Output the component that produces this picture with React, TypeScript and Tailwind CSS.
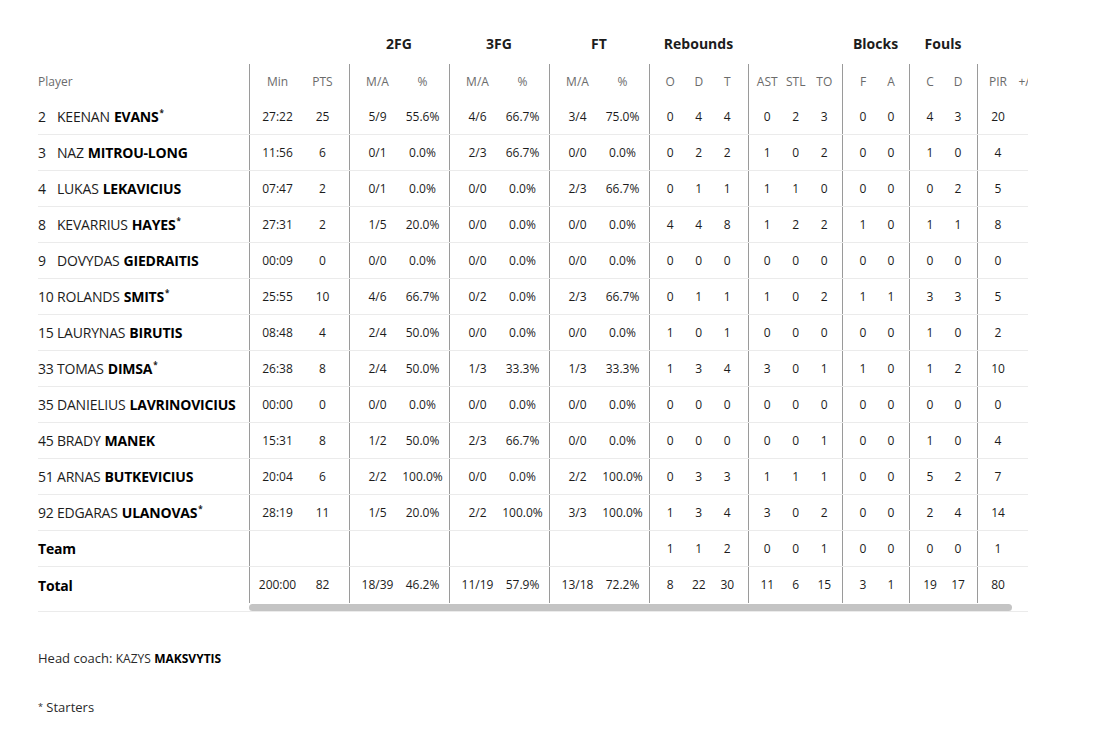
import React from 'react';

type Group = {
  label: string;
  box: string;
  cells: string[];
};

// widths per column group, the first cell of each group draws the divider
const groups: Group[] = [
  { label: '', box: 'w-[100px] pl-[5px]', cells: ['w-[45px]', 'w-[45px]'] },
  { label: '2FG', box: 'w-[100px] pl-[5px]', cells: ['w-[45px]', 'w-[45px]'] },
  { label: '3FG', box: 'w-[100px] pl-[5px]', cells: ['w-[45px]', 'w-[45px]'] },
  { label: 'FT', box: 'w-[100px] pl-[5px]', cells: ['w-[45px]', 'w-[45px]'] },
  { label: 'Rebounds', box: 'w-[99px] pl-[6px]', cells: ['w-[28.5px]', 'w-[28.5px]', 'w-[28.5px]'] },
  { label: '', box: 'w-[94px] pl-[4px]', cells: ['w-[28.5px]', 'w-[28.5px]', 'w-[28.5px]'] },
  { label: 'Blocks', box: 'w-[67px] pl-[6px]', cells: ['w-[28px]', 'w-[28px]'] },
  { label: 'Fouls', box: 'w-[68px] pl-[6px]', cells: ['w-[28px]', 'w-[28px]'] },
  { label: '', box: 'w-[68px] pl-[6px]', cells: ['w-[28px]', 'w-[28px]'] },
];

const headers = [
  ['Min', 'PTS'],
  ['M/A', '%'],
  ['M/A', '%'],
  ['M/A', '%'],
  ['O', 'D', 'T'],
  ['AST', 'STL', 'TO'],
  ['F', 'A'],
  ['C', 'D'],
  ['PIR', '+/-'],
];

type Row = {
  no?: string;
  first?: string;
  last: string;
  starter?: boolean;
  bold?: boolean;
  stats: string[];
};

const rows: Row[] = [
  { no: '2', first: 'KEENAN', last: 'EVANS', starter: true, stats: ['27:22', '25', '5/9', '55.6%', '4/6', '66.7%', '3/4', '75.0%', '0', '4', '4', '0', '2', '3', '0', '0', '4', '3', '20', ''] },
  { no: '3', first: 'NAZ', last: 'MITROU-LONG', stats: ['11:56', '6', '0/1', '0.0%', '2/3', '66.7%', '0/0', '0.0%', '0', '2', '2', '1', '0', '2', '0', '0', '1', '0', '4', ''] },
  { no: '4', first: 'LUKAS', last: 'LEKAVICIUS', stats: ['07:47', '2', '0/1', '0.0%', '0/0', '0.0%', '2/3', '66.7%', '0', '1', '1', '1', '1', '0', '0', '0', '0', '2', '5', ''] },
  { no: '8', first: 'KEVARRIUS', last: 'HAYES', starter: true, stats: ['27:31', '2', '1/5', '20.0%', '0/0', '0.0%', '0/0', '0.0%', '4', '4', '8', '1', '2', '2', '1', '0', '1', '1', '8', ''] },
  { no: '9', first: 'DOVYDAS', last: 'GIEDRAITIS', stats: ['00:09', '0', '0/0', '0.0%', '0/0', '0.0%', '0/0', '0.0%', '0', '0', '0', '0', '0', '0', '0', '0', '0', '0', '0', ''] },
  { no: '10', first: 'ROLANDS', last: 'SMITS', starter: true, stats: ['25:55', '10', '4/6', '66.7%', '0/2', '0.0%', '2/3', '66.7%', '0', '1', '1', '1', '0', '2', '1', '1', '3', '3', '5', ''] },
  { no: '15', first: 'LAURYNAS', last: 'BIRUTIS', stats: ['08:48', '4', '2/4', '50.0%', '0/0', '0.0%', '0/0', '0.0%', '1', '0', '1', '0', '0', '0', '0', '0', '1', '0', '2', ''] },
  { no: '33', first: 'TOMAS', last: 'DIMSA', starter: true, stats: ['26:38', '8', '2/4', '50.0%', '1/3', '33.3%', '1/3', '33.3%', '1', '3', '4', '3', '0', '1', '1', '0', '1', '2', '10', ''] },
  { no: '35', first: 'DANIELIUS', last: 'LAVRINOVICIUS', stats: ['00:00', '0', '0/0', '0.0%', '0/0', '0.0%', '0/0', '0.0%', '0', '0', '0', '0', '0', '0', '0', '0', '0', '0', '0', ''] },
  { no: '45', first: 'BRADY', last: 'MANEK', stats: ['15:31', '8', '1/2', '50.0%', '2/3', '66.7%', '0/0', '0.0%', '0', '0', '0', '0', '0', '1', '0', '0', '1', '0', '4', ''] },
  { no: '51', first: 'ARNAS', last: 'BUTKEVICIUS', stats: ['20:04', '6', '2/2', '100.0%', '0/0', '0.0%', '2/2', '100.0%', '0', '3', '3', '1', '1', '1', '0', '0', '5', '2', '7', ''] },
  { no: '92', first: 'EDGARAS', last: 'ULANOVAS', starter: true, stats: ['28:19', '11', '1/5', '20.0%', '2/2', '100.0%', '3/3', '100.0%', '1', '3', '4', '3', '0', '2', '0', '0', '2', '4', '14', ''] },
  { last: 'Team', bold: true, stats: ['', '', '', '', '', '', '', '', '1', '1', '2', '0', '0', '1', '0', '0', '0', '0', '1', ''] },
  { last: 'Total', bold: true, stats: ['200:00', '82', '18/39', '46.2%', '11/19', '57.9%', '13/18', '72.2%', '8', '22', '30', '11', '6', '15', '3', '1', '19', '17', '80', ''] },
];

function splitStats(stats: string[]) {
  const out: string[][] = [];
  let i = 0;
  for (const g of groups) {
    out.push(stats.slice(i, i + g.cells.length));
    i += g.cells.length;
  }
  return out;
}

function StatRow({ values, header, last }: { values: string[][]; header?: boolean; last?: boolean }) {
  return (
    <div className={`flex ${header ? 'h-[35px]' : 'h-[36px]'} ${header || last ? '' : 'border-b border-[#ebebeb]'}`}>
      {groups.map((g, gi) => (
        <div key={gi} className={`flex shrink-0 items-center border-l border-[#9a9a9a] ${g.box}`}>
          {g.cells.map((w, ci) => (
            <div
              key={ci}
              className={`${w} shrink-0 text-center ${header ? 'text-[12px] text-[#6b6b6b]' : 'text-[12px] text-[#1c1c1c]'}`}
            >
              {values[gi][ci]}
            </div>
          ))}
        </div>
      ))}
    </div>
  );
}

export default function App() {
  return (
    <div className="min-h-[730px] w-full bg-white pl-[38px] pt-[24px] font-['Open_Sans',sans-serif] text-[#1c1c1c]">
      <div className="flex w-[990px] border-b border-[#ebebeb]">
        {/* player column */}
        <div className="w-[211px] shrink-0">
          <div className="h-[40px]" />
          <div className="flex h-[35px] items-center text-[12px] text-[#6b6b6b]">Player</div>
          {rows.map((r, i) => (
            <div
              key={i}
              className={`flex h-[36px] items-center whitespace-nowrap text-[14px] tracking-[-0.2px] ${i === rows.length - 1 ? '' : 'border-b border-[#ebebeb]'}`}
            >
              {r.no && <span className="inline-block w-[19px]">{r.no}</span>}
              {r.first && <span className="mr-[4px]">{r.first}</span>}
              <span className={r.bold || r.first ? 'font-bold text-black' : ''}>{r.last}</span>
              {r.starter && <span className="relative -top-[4px] ml-[1px] text-[8px] font-bold">*</span>}
            </div>
          ))}
          <div className="h-[8px]" />
        </div>

        <div className="w-[779px] shrink-0 overflow-hidden">
          <div className="w-[796px]">
            <div className="flex h-[40px] items-center pb-[2px]">
              {groups.map((g, gi) => (
                <div key={gi} className={`shrink-0 text-center text-[14px] font-bold text-[#1c1c1c] ${g.box.split(' ')[0]}`}>
                  {g.label}
                </div>
              ))}
            </div>
            <StatRow values={headers} header />
            {rows.map((r, i) => (
              <StatRow key={i} values={splitStats(r.stats)} last={i === rows.length - 1} />
            ))}
          </div>
          <div className="flex h-[8px] items-center">
            <div className="h-[7px] w-[763px] rounded-full bg-[#c4c4c4]" />
          </div>
        </div>
      </div>

      <div className="mt-[37px] text-[13px] text-[#2a2a2a]">
        Head coach: <span className="text-[12px]">KAZYS</span>{' '}
        <span className="text-[12px] font-bold text-black">MAKSVYTIS</span>
      </div>
      <div className="mt-[29px] text-[13px] text-[#2a2a2a]">
        <span className="relative -top-[2px] text-[9px]">*</span> Starters
      </div>
    </div>
  );
}
